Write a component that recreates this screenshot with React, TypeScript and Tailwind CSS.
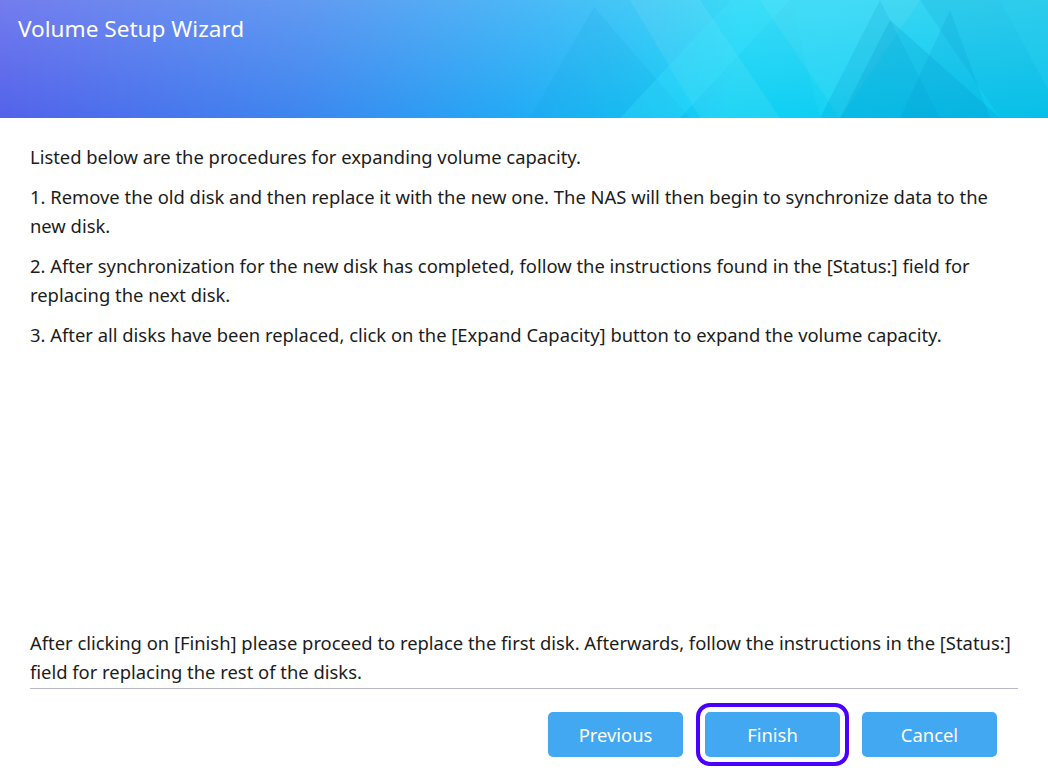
import React from 'react';

const steps = [
  'Listed below are the procedures for expanding volume capacity.',
  '1. Remove the old disk and then replace it with the new one. The NAS will then begin to synchronize data to the new disk.',
  '2. After synchronization for the new disk has completed, follow the instructions found in the [Status:] field for replacing the next disk.',
  '3. After all disks have been replaced, click on the [Expand Capacity] button to expand the volume capacity.',
];

function HeaderPattern() {
  return (
    <svg className="absolute inset-0 w-full h-full" viewBox="0 0 1048 118" preserveAspectRatio="none">
      <defs>
        <linearGradient id="shade" x1="0" y1="0" x2="0" y2="1">
          <stop offset="0" stopColor="#ffffff" stopOpacity="0.18" />
          <stop offset="1" stopColor="#ffffff" stopOpacity="0" />
        </linearGradient>
      </defs>
      <rect x="0" y="0" width="1048" height="118" fill="url(#shade)" />
      <polygon points="594,7 530,118 690,118" fill="#0aa0d8" opacity="0.12" />
      <polygon points="630,0 700,0 780,118 700,118" fill="#ffffff" opacity="0.07" />
      <polygon points="730,0 790,0 680,118 620,118" fill="#40e8ff" opacity="0.25" />
      <polygon points="790,0 880,0 820,118" fill="#30e0ff" opacity="0.2" />
      <polygon points="760,0 920,0 840,118" fill="#ffffff" opacity="0.06" />
      <polygon points="880,0 820,118 940,118" fill="#008fc8" opacity="0.12" />
      <polygon points="890,20 840,118 1000,118" fill="#0090c8" opacity="0.2" />
      <polygon points="960,0 1048,0 1048,118 1000,118 920,0" fill="#0a9ed0" opacity="0.18" />
      <polygon points="1000,0 1048,0 1048,90" fill="#30d8f5" opacity="0.25" />
      <polygon points="950,10 900,118 990,118" fill="#0090cc" opacity="0.15" />
    </svg>
  );
}

export default function App() {
  return (
    <div className="w-[1048px] h-[778px] flex flex-col bg-white overflow-hidden" style={{ fontFamily: '"Noto Sans", "Open Sans", sans-serif' }}>
      <div className="relative h-[118px] shrink-0 bg-[linear-gradient(100deg,#5560ea_0%,#3d86ef_30%,#22aaf5_50%,#10d2f5_70%,#08c6ec_100%)]">
        <HeaderPattern />
        <h1 className="relative pl-[18px] pt-[14px] text-[22.6px] leading-[30px] text-white">Volume Setup Wizard</h1>
      </div>

      <div className="flex-1 px-[30px] pt-[24px] text-[18.4px] leading-[29px] text-[#1c1c1c]">
        {steps.map((s, i) => (
          <p key={i} className="mb-[11px]">{s}</p>
        ))}
      </div>

      <div className="px-[30px]">
        <p className="text-[18.4px] leading-[29px] text-[#1c1c1c] pb-[2px]">
          After clicking on [Finish] please proceed to replace the first disk. Afterwards, follow the instructions in the [Status:] field for replacing the rest of the disks.
        </p>
        <div className="h-px bg-[#b8b8cc]" />
        <div className="flex justify-end gap-[22px] pt-[23px] pb-[21px] pr-[21px]">
          <button className="w-[135px] h-[45px] rounded-[5px] bg-[#42a8f2] text-white text-[18.4px]">Previous</button>
          <button className="w-[135px] h-[45px] rounded-[5px] bg-[#42a8f2] text-white text-[18.4px] outline-4 outline-offset-[5px] outline-[#4a00ff]">Finish</button>
          <button className="w-[135px] h-[45px] rounded-[5px] bg-[#42a8f2] text-white text-[18.4px]">Cancel</button>
        </div>
      </div>
    </div>
  );
}
